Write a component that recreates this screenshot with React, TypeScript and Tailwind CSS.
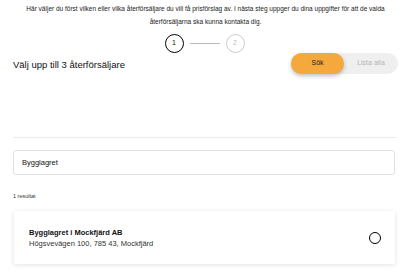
import React, { useState } from 'react';

const App: React.FC = () => {
  const [mode, setMode] = useState<'search' | 'list'>('search');
  const [query, setQuery] = useState('Bygglagret');

  return (
    <div className="min-h-screen bg-white text-[#111] font-['Liberation_Sans',Arial,sans-serif]">
      <div className="pl-[13px] pr-[4px]">
        {/* Intro */}
        <p className="pt-[2px] text-center text-[6.5px] leading-[13px] text-[#222] pl-[2px]">
          Här väljer du först vilken eller vilka återförsäljare du vill få prisförslag av. I nästa steg uppger du dina uppgifter för att de valda
          <br />
          återförsäljarna ska kunna kontakta dig.
        </p>

        {/* Stepper */}
        <div className="mt-[6px] flex items-center justify-center gap-[6px]">
          <div className="w-[19px] h-[19px] rounded-full border-[1.5px] border-black flex items-center justify-center text-[7px]">1</div>
          <div className="w-[30px] h-px bg-[#bbb]" />
          <div className="w-[19px] h-[19px] rounded-full border-[1.5px] border-[#ccc] flex items-center justify-center text-[7px] text-[#bbb]">2</div>
        </div>

        {/* Heading + toggle */}
        <div className="flex items-center justify-between">
          <h2 className="mt-[3px] text-[9.5px] text-[#111]">Välj upp till 3 återförsäljare</h2>
          <div className="flex items-center rounded-full bg-[#efefef] -mr-[2px]">
            <button
              onClick={() => setMode('search')}
              className={`w-[53px] h-[21px] rounded-full text-[7px] ${mode === 'search' ? 'bg-[#f5a93c] text-[#222] shadow-[0_2px_4px_rgba(0,0,0,0.25)]' : 'text-[#aaa]'}`}
            >
              Sök
            </button>
            <button
              onClick={() => setMode('list')}
              className={`w-[54px] h-[21px] rounded-full text-[7px] ${mode === 'list' ? 'bg-[#f5a93c] text-[#222]' : 'text-[#b5b5b5]'}`}
            >
              Lista alla
            </button>
          </div>
        </div>

        {/* Divider */}
        <div className="mt-[63px] h-px bg-[#ececec]" />

        {/* Search input */}
        <input
          value={query}
          onChange={(e) => setQuery(e.target.value)}
          className="mt-[12px] w-[382px] h-[25px] rounded-[3px] border border-[#e3e3e3] px-[8px] text-[7.5px] text-[#111] outline-none"
        />

        {/* Results */}
        <div className="mt-[17px] text-[5.5px] text-[#333]">1 resultat</div>

        <div className="mt-[11px] ml-px w-[381px] h-[53px] flex items-center justify-between pl-[15px] pr-[14px] bg-white shadow-[0_1px_5px_rgba(0,0,0,0.12)]">
          <div className="leading-[11px]">
            <div className="text-[7.5px] font-bold">Bygglagret i Mockfjärd AB</div>
            <div className="text-[7.5px] text-[#333]">Högsvevägen 100, 785 43, Mockfjärd</div>
          </div>
          <div className="w-[12px] h-[12px] rounded-full border-[1.5px] border-black" />
        </div>
      </div>
    </div>
  );
};

export default App;
